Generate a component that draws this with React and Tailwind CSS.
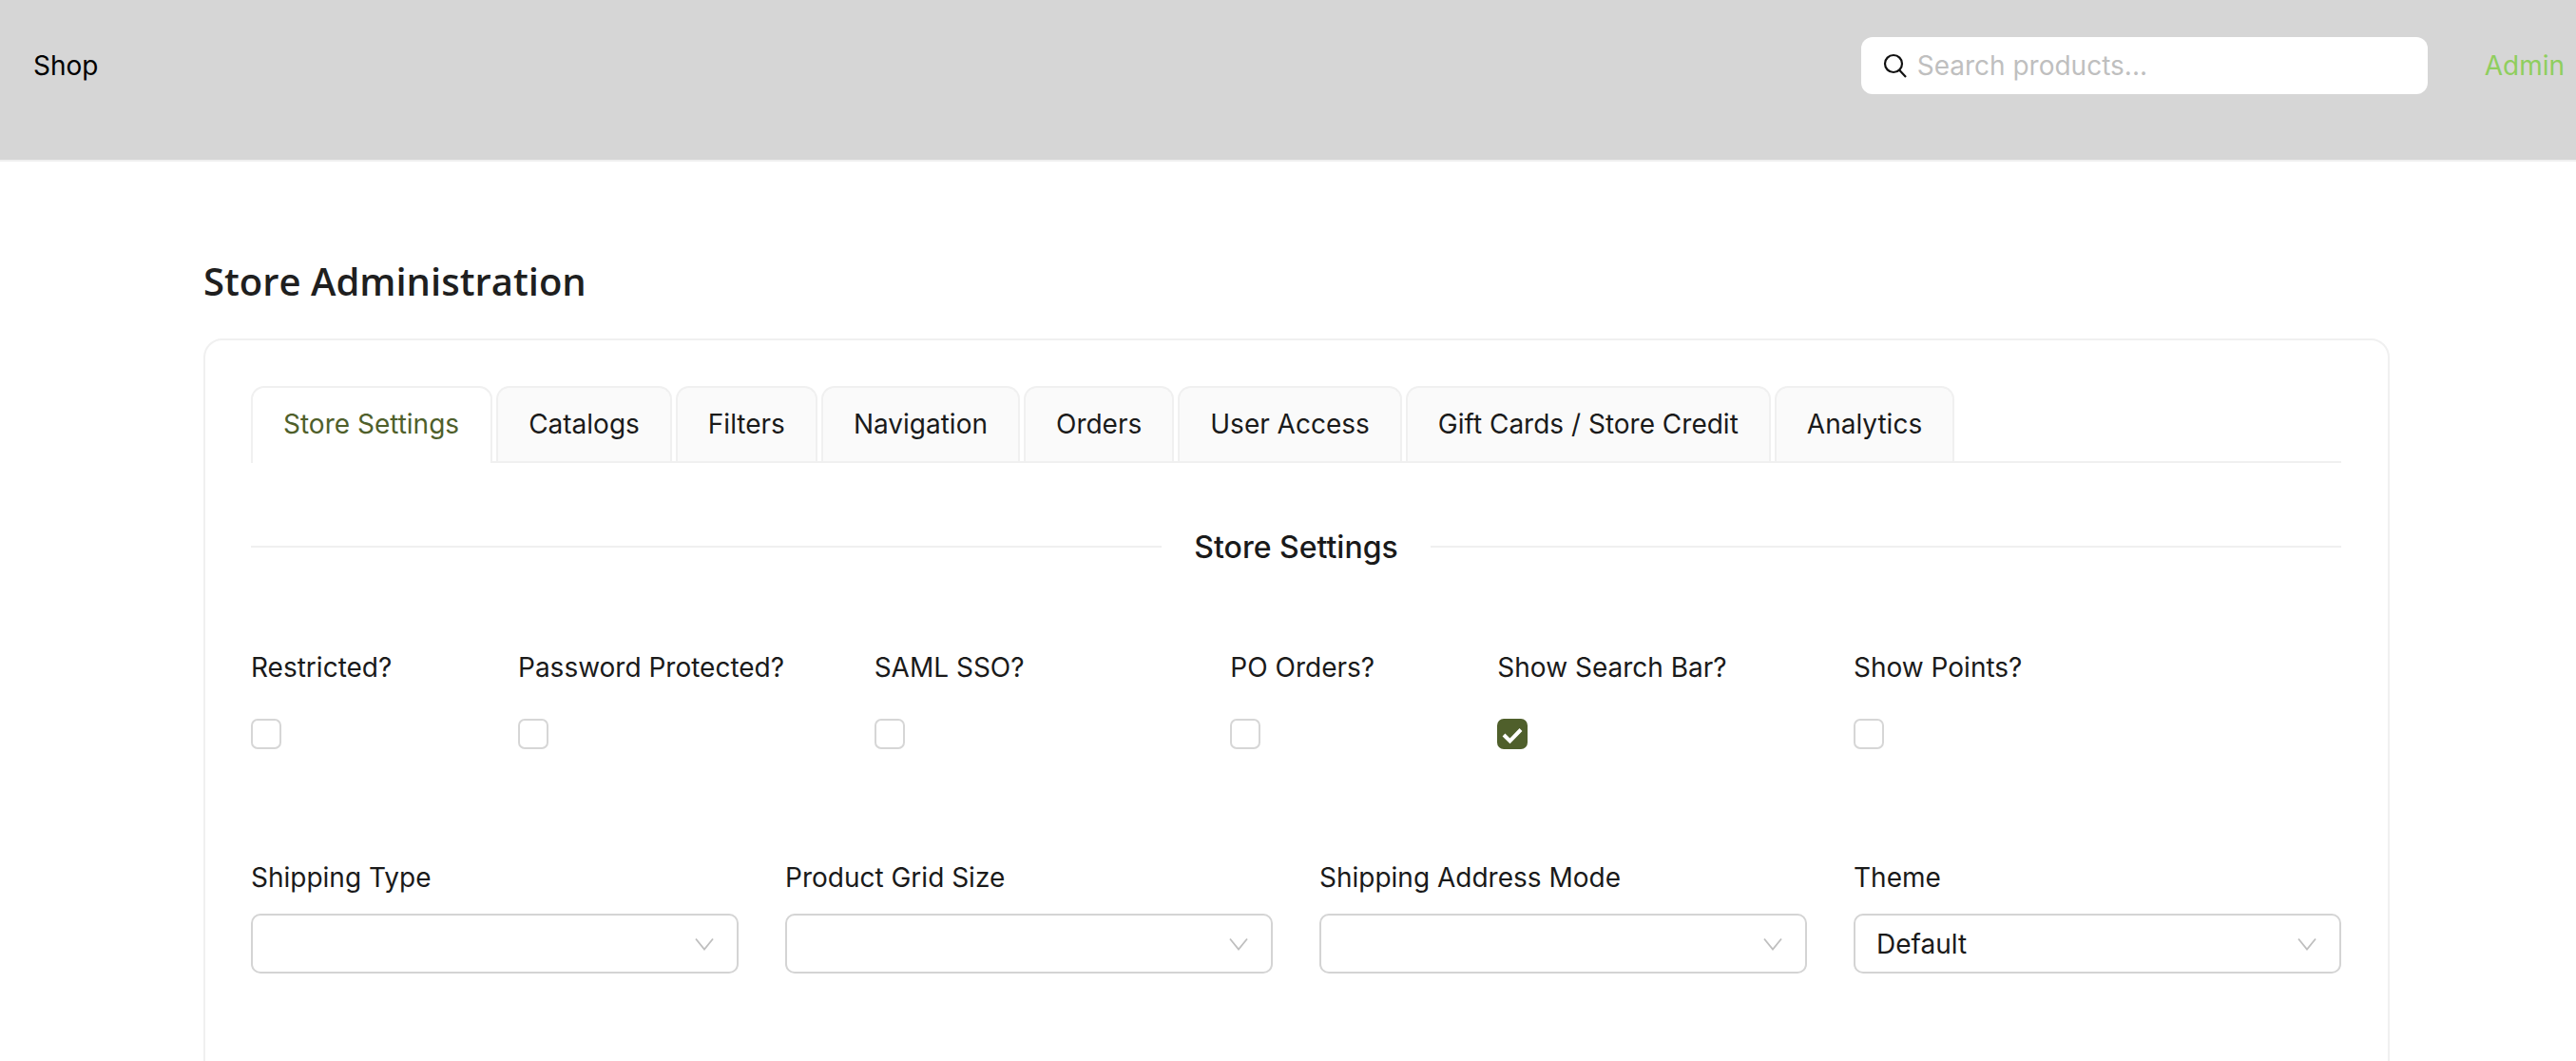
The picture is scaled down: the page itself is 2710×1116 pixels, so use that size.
const tabs = ['Store Settings', 'Catalogs', 'Filters', 'Navigation', 'Orders', 'User Access', 'Gift Cards / Store Credit', 'Analytics'];

const toggles = [
  { label: 'Restricted?', span: 'col-span-3' },
  { label: 'Password Protected?', span: 'col-span-4' },
  { label: 'SAML SSO?', span: 'col-span-4' },
  { label: 'PO Orders?', span: 'col-span-3' },
  { label: 'Show Search Bar?', span: 'col-span-4', checked: true },
  { label: 'Show Points?', span: 'col-span-3' },
];

const selects = [
  { label: 'Shipping Type', value: '' },
  { label: 'Product Grid Size', value: '' },
  { label: 'Shipping Address Mode', value: '' },
  { label: 'Theme', value: 'Default' },
];

function Toggle({ label, span, checked }) {
  return (
    <div className={`${span} flex flex-col`}>
      <label className="h-[50px] leading-[50px] whitespace-nowrap">{label}</label>
      <div className="mt-[29px]">
        {checked ? (
          <div className="w-8 h-8 rounded-[7px] bg-[#4f5f2b] flex items-center justify-center">
            <svg width="32" height="32" viewBox="0 0 32 32" fill="none">
              <path d="M7 17l6.5 6.5L25 11.5" stroke="#fff" strokeWidth="4" />
            </svg>
          </div>
        ) : (
          <div className="w-8 h-8 rounded-[7px] border-2 border-[#d6d6d6] bg-white"></div>
        )}
      </div>
    </div>
  );
}

function SelectBox({ label, value }) {
  return (
    <div className="flex flex-col">
      <label className="h-[50px] leading-[50px]">{label}</label>
      <div className="mt-[13px] h-[63px] rounded-[10px] border-2 border-[#d4d4d4] bg-white flex items-center justify-between pl-[22px] pr-[24px]">
        <span>{value}</span>
        <svg width="20" height="14" viewBox="0 0 20 14" fill="none">
          <path d="M1 1.5l9 11 9-11" stroke="#bfbfbf" strokeWidth="1.8" />
        </svg>
      </div>
    </div>
  );
}

export default function App() {
  return (
    <div className="h-screen overflow-hidden bg-white text-[#1a1a1a] font-['Inter',sans-serif] text-[28px]">
      {/* Top bar */}
      <header className="h-[170px] bg-[#d6d6d6] border-b-2 border-[#efefef] flex items-start justify-between pl-[35px] pr-[12px]">
        <div className="h-[138px] leading-[138px] text-black">Shop</div>
        <div className="flex items-center mt-[39px]">
          <div className="w-[596px] h-[60px] rounded-[12px] bg-white flex items-center pl-[23px]">
            <svg width="26" height="26" viewBox="0 0 26 26" fill="none">
              <circle cx="11" cy="11" r="9" stroke="#111" strokeWidth="2.2" />
              <path d="M17 17.5l7 7.5" stroke="#111" strokeWidth="2.2" />
            </svg>
            <span className="ml-[10px] text-[#bfbfbf]">Search products...</span>
          </div>
          <div className="ml-[60px] text-[#8fce5e]">Admin</div>
        </div>
      </header>

      <main className="pl-[214px] pt-[101px]">
        <h1 className="h-[85px] font-['Open_Sans',sans-serif] font-semibold text-[40px] leading-[50px] text-[#1f1f1f]">Store Administration</h1>

        <div className="w-[2300px] h-[900px] rounded-[20px] border-2 border-[#f0f0f0] pt-[48px] pl-[48px] pr-[49px]">
          {/* Tabs */}
          <div className="flex gap-[4px] border-b-2 border-[#f0f0f0] h-[81px]">
            {tabs.map((tab, i) => (
              <div
                key={tab}
                className={
                  i === 0
                    ? 'h-[81px] pl-[32px] pr-[33px] leading-[76px] rounded-t-[14px] border-2 border-b-0 border-[#f0f0f0] bg-white text-[#4f5f2b] whitespace-nowrap'
                    : 'h-[79px] px-[32px] leading-[76px] rounded-t-[14px] border-2 border-b-0 border-[#f0f0f0] bg-[#fafafa] whitespace-nowrap'
                }
              >
                {tab}
              </div>
            ))}
          </div>

          {/* Section divider */}
          <div className="mt-[54px] h-[70px] flex items-center">
            <div className="flex-1 h-[2px] mb-[3px] bg-[#f0f0f0]"></div>
            <div className="px-[34px] text-[32px] font-medium">Store Settings</div>
            <div className="flex-1 h-[2px] mb-[3px] bg-[#f0f0f0]"></div>
          </div>

          <div className="mt-[66px] w-[2248px] grid grid-cols-24">
            {toggles.map((t) => (
              <Toggle key={t.label} {...t} />
            ))}
          </div>

          <div className="mt-[110px] grid grid-cols-4 gap-x-[49px]">
            {selects.map((s) => (
              <SelectBox key={s.label} {...s} />
            ))}
          </div>
        </div>
      </main>
    </div>
  );
}
